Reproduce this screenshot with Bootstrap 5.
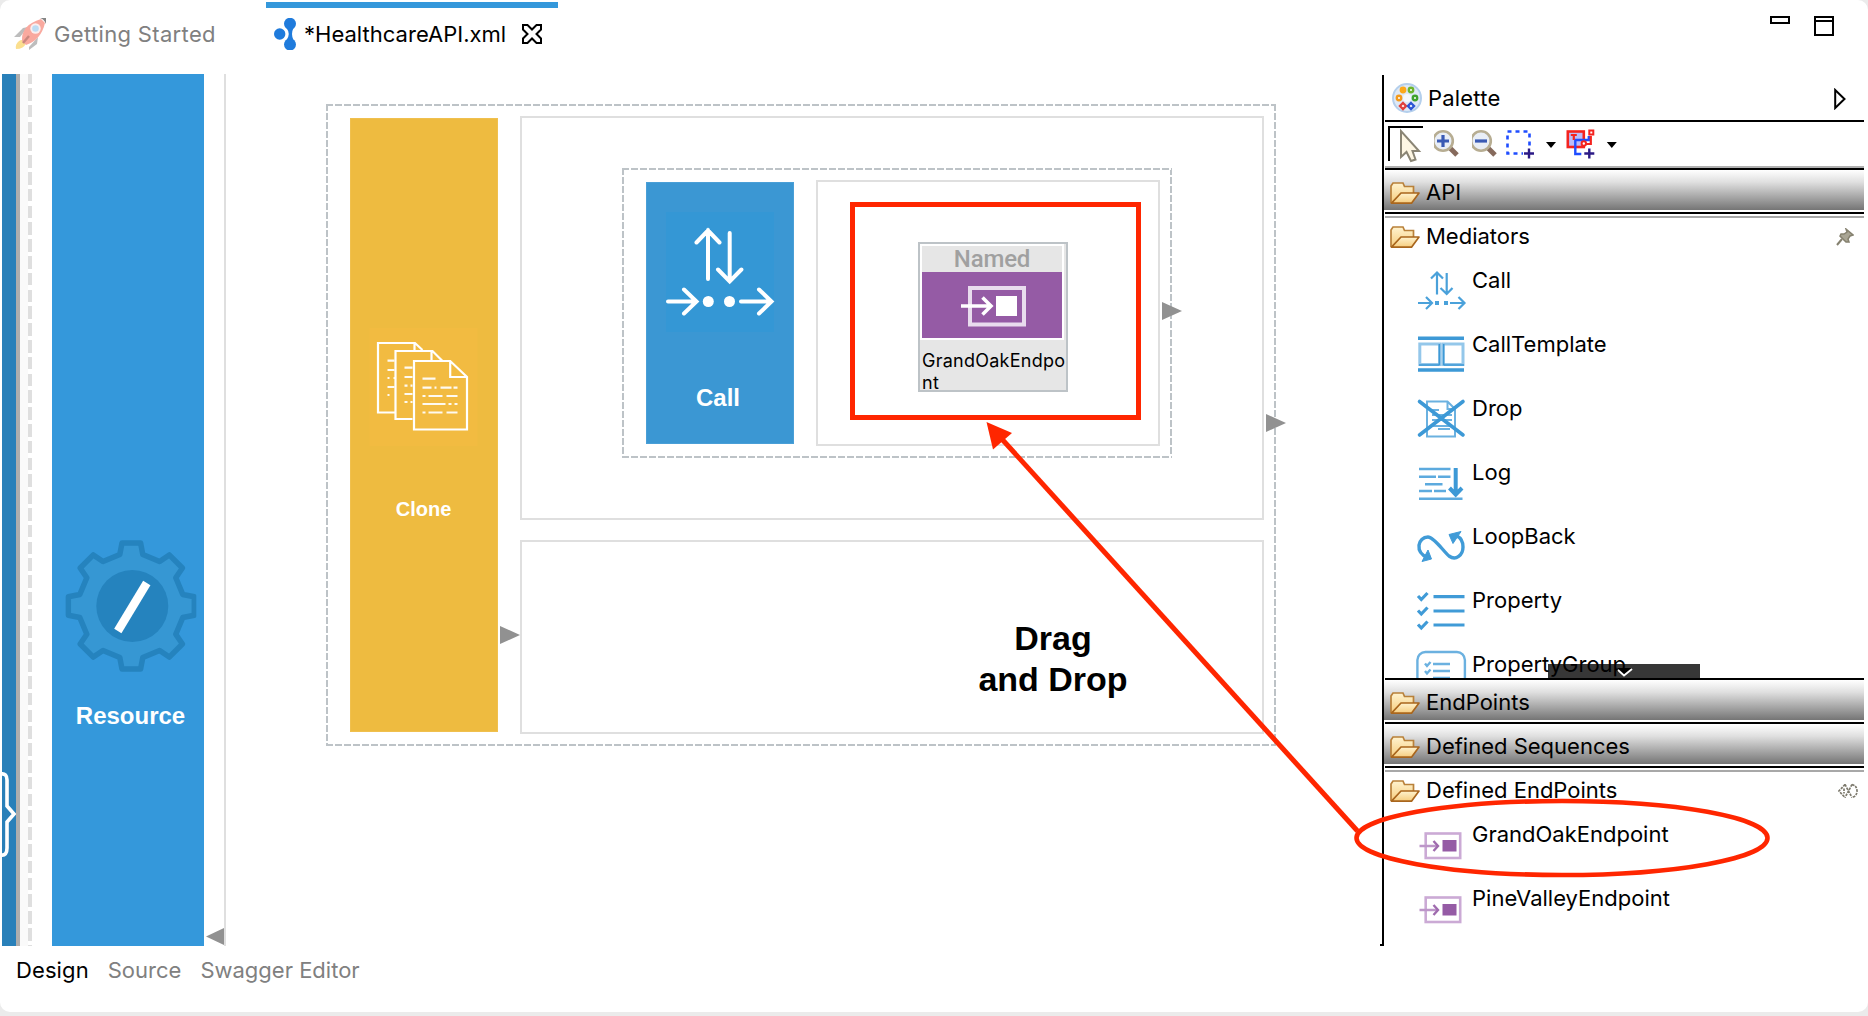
<!DOCTYPE html>
<html lang="en">
<head>
<meta charset="utf-8">
<meta name="viewport" content="width=device-width, initial-scale=1">
<title>HealthcareAPI.xml</title>
<link href="https://cdn.jsdelivr.net/npm/bootstrap@5.3.0/dist/css/bootstrap.min.css" rel="stylesheet">
<style>
  body { background: #ebebeb; font-family: Inter, "Liberation Sans", sans-serif; font-size: 22px; line-height: 28px; color: #000; overflow: hidden; }
  svg { display: block; flex: none; }
  .editor { width: 1868px; height: 1012px; background: #fff; border-radius: 10px; }
  .tabs { height: 74px; padding-left: 14px; }
  .tab { height: 68px; }
  .tab-idle { width: 252px; color: #808080; letter-spacing: .34px; }
  .tab-idle svg { margin-right: 8px; }
  .tab-open { width: 292px; padding-left: 8px; letter-spacing: .02px; }
  .tab-open::before { content: ""; position: absolute; left: 0; top: 2px; width: 100%; height: 6px; background: #3498db; }
  .tab-logo { margin-right: 8px; }
  .tab-close { margin-left: 15px; }
  .win-btns { padding: 16px 34px 0 0; gap: 24px; }
  .work { height: 872px; }
  .api-bar { width: 16px; padding-left: 2px; }
  .api-fill { background: #2980b9; }
  .shade { width: 4px; background: #adadad; }
  .pale { width: 8px; background: #fafafa; }
  .dash-v { width: 4px; margin-right: 20px; background: repeating-linear-gradient(#dfdfdf 0 12.6px, #fff 12.6px 16.8px) 0 -2.8px / 4px 900px; }
  .resource { width: 152px; background: #3498db; padding-top: 464px; }
  .node-title { font-family: "Liberation Sans", Arial, sans-serif; font-weight: 700; color: #fff; text-align: center; }
  .resource .node-title { font-size: 24px; margin-top: 28px; padding-left: 5px; }
  .gutter { width: 22px; border-right: 2px solid #dfdfdf; padding-bottom: 1px; }
  .canvas { width: 1156px; }
  .dashed-box {
    background:
      repeating-linear-gradient(90deg, #bdc3c7 0 7px, #fff 7px 9px) 0 0 / 100% 2px no-repeat,
      repeating-linear-gradient(90deg, #bdc3c7 0 7px, #fff 7px 9px) 0 100% / 100% 2px no-repeat,
      repeating-linear-gradient(#bdc3c7 0 7px, #fff 7px 9px) 0 0 / 2px 100% no-repeat,
      repeating-linear-gradient(#bdc3c7 0 7px, #fff 7px 9px) 100% 0 / 2px 100% no-repeat;
    padding: 12px 12px 12px 24px; gap: 22px;
  }
  .clone-box { left: 100px; top: 30px; width: 950px; height: 642px; }
  .branches { gap: 20px; }
  .call-box { width: 550px; height: 290px; margin: 50px 0 0 100px; }
  .solid-box { border: 2px solid #dfdfdf; }
  .branch-a { height: 404px; }
  .branch-b { height: 194px; padding: 76px 0 0 322px; }
  .mediator { width: 148px; margin: 2px 0; }
  .clone { background: #eebb40; box-shadow: inset 0 0 0 1px #f0c04e; padding-top: 210px; }
  .clone .node-title { font-size: 20px; margin-top: 49px; padding-right: 1px; }
  .call { background: #3b97d3; box-shadow: inset 0 0 0 1px #4a9fd7; padding-top: 30px; }
  .call .node-title { font-size: 24px; margin-top: 52px; padding-right: 4px; }
  .named { width: 150px; height: 150px; margin: 60px 0 0 100px; border: 2px solid #bdc3c7; background: #e6e6e6; font-size: 18px; line-height: 22px; letter-spacing: .25px; }
  .named-head { width: 144px; height: 96px; border: 2px solid #fff; }
  .named-label { height: 26px; line-height: 26px; font-family: Roboto, sans-serif; font-size: 24px; font-weight: 500; color: #a0a0a0; letter-spacing: -.2px; text-align: center; }
  .named-name { padding: 10px 0 0 2px; white-space: nowrap; }
  .hint { font-family: "Liberation Sans", Arial, sans-serif; font-weight: 700; font-size: 34px; line-height: 41px; text-align: center; width: 418px; }
  .arrow-mark { position: absolute; }
  .am1 { left: 936px; top: 228px; } .am2 { left: 1040px; top: 340px; } .am3 { left: 274px; top: 552px; }
  .palette { width: 484px; border-left: 2px solid #000; margin-top: 1px; }
  .palette-in { width: 480px; }
  .pal-title { height: 45px; padding: 0 18px 0 8px; }
  .pal-name { padding: 1px 0 0 6px; letter-spacing: .2px; }
  .pal-toggle { margin-top: 3px; }
  .rule { height: 2px; margin-left: 1px; background: #000; }
  .rule-shade { box-shadow: 0 -2px #b0b0b0; }
  .tools { height: 46px; padding-left: 4px; }
  .drawer { height: 40px; padding: 4px 6px 0 6px; gap: 6px; }
  .drawer svg { margin-top: 2px; }
  .drawer-closed { background: linear-gradient(#fff, #e0e0e0 30%, #757575); }
  .drawer-open { background: linear-gradient(#a8a8a8, #a8a8a8) 1px 2px / 100% 2px no-repeat; }
  .gap-line { margin-top: 2px; }
  .items { height: 424px; overflow: hidden; position: relative; }
  .item { height: 64px; padding-left: 32px; gap: 4px; }
  .item span { padding-top: 12px; position: relative; z-index: 1; }
  .more { position: absolute; left: 164px; bottom: 0; width: 152px; height: 14px; background: #373737; }
  .more svg { position: absolute; left: 68px; top: 3px; z-index: 2; }
  .views { padding: 10px 0 0 16px; gap: 19px; color: #808080; }
  .views .on { color: #000; letter-spacing: .1px; }
  .notes { position: absolute; left: 0; top: 0; pointer-events: none; z-index: 5; }
</style>
<script src="https://cdn.jsdelivr.net/npm/bootstrap@5.3.0/dist/js/bootstrap.bundle.min.js"></script>
</head>
<body>
<svg width="0" height="0" class="position-absolute">
  <defs>
    <linearGradient id="fg" x1="0" y1="0" x2="0" y2="1"><stop offset="0" stop-color="#fff3cf"/><stop offset="1" stop-color="#f6cd7e"/></linearGradient>
    <symbol id="folder" viewBox="0 0 30 22">
      <path d="M1 21V4l2-3h10l1.500 3.500h9V11" fill="url(#fg)" stroke="#b9813a" stroke-width="1.700"/>
      <path d="M1.500 21.200 11 11H29L21.500 21.200Z" fill="url(#fg)" stroke="#a9661d" stroke-width="1.700" stroke-linejoin="round"/>
    </symbol>
    <symbol id="endpoint" viewBox="0 0 52 64">
      <rect x="9.200" y="25.500" width="34.500" height="24.500" fill="none" stroke="#cbaad5" stroke-width="2.600"/>
      <rect x="26" y="32" width="14" height="11.500" fill="#955ba5"/>
      <path d="M3 38h18" stroke="#bd96c9" stroke-width="2.400"/><path d="M17 33l4.500 5-4.500 5" fill="none" stroke="#9f6bae" stroke-width="2.400"/>
    </symbol>
  </defs>
</svg>

<div class="editor d-flex flex-column position-relative">
  <header class="tabs d-flex">
    <div class="tab tab-idle d-flex align-items-center">
      <svg width="32" height="32" viewBox="0 0 32 32">
        <path d="M0 19l9-9 5-1-8 10zM15 29l9-10-1 7-8 6z" fill="#bdbdbd"/>
        <path d="M5 23q4-3 7 2-2 6-10 6-1-5 3-8z" fill="#fbdf8f"/>
        <path d="M8 23Q7 7 27 1l4 4Q27 22 12 27z" fill="#f9a99f"/>
        <path d="M26 0h6v6q-2-5-6-6z" fill="#858585"/>
        <circle cx="21.500" cy="10.500" r="5.200" fill="#fbeeee"/><circle cx="21.500" cy="10.500" r="3.300" fill="#bcdcf3"/>
        <path d="M9 25l6-7" stroke="#c9877f" stroke-width="2.400"/>
      </svg>
      <span>Getting Started</span>
    </div>
    <div class="tab tab-open position-relative d-flex align-items-center">
      <svg class="tab-logo" width="22" height="32" viewBox="0 0 22 32" fill="#1f7bdc">
        <circle cx="5.700" cy="16" r="5.700"/><circle cx="16" cy="5.800" r="6"/><circle cx="16" cy="26.500" r="6"/>
        <path d="M12.500 10q4.500 6 0 12h7q-3-6 0-12z"/>
      </svg>
      <span>*HealthcareAPI.xml</span>
      <svg class="tab-close" width="22" height="22" viewBox="0 0 22 22" fill="none" stroke="#000" stroke-width="2"><path d="M2 2h4.500L11 6.500 15.500 2H20v4.500L15.500 11 20 15.500V20h-4.500L11 15.500 6.500 20H2v-4.500L6.500 11 2 6.500z"/></svg>
    </div>
    <div class="win-btns ms-auto d-flex align-items-start">
      <svg width="20" height="8" viewBox="0 0 20 8" fill="none" stroke="#000" stroke-width="2"><path d="M1 1h18v6H1z"/></svg>
      <svg width="20" height="20" viewBox="0 0 20 20" fill="none" stroke="#000" stroke-width="2"><path d="M1 1h18v18H1zM1 5h18"/></svg>
    </div>
  </header>

  <main class="work d-flex">
    <div class="api-bar d-flex">
      <div class="api-fill w-100">
        <svg width="14" height="872" viewBox="2 74 14 872" fill="none" stroke="#fff" stroke-width="3.600"><path d="M1 774q6-1 6 6v26l7 8-7 8v26q0 8-6 7"/></svg>
      </div>
    </div>
    <div class="shade"></div><div class="pale"></div><div class="dash-v"></div>
    <div class="resource">
      <svg width="152" height="136" viewBox="-79.300 -68 152 136">
        <clipPath id="gc"><rect x="-66" y="-67" width="131" height="134"/></clipPath>
        <path clip-path="url(#gc)" fill="#3697d3" stroke="#2583be" stroke-width="5.500" stroke-linejoin="round" d="M-11.500-51.500-9.300-63 9.300-63 11.500-51.500 28.300-44.500 38-51.100 51.100-38 44.500-28.300 51.500-11.500 63-9.300 63 9.300 51.500 11.500 44.500 28.300 51.100 38 38 51.100 28.300 44.500 11.500 51.500 9.300 63-9.300 63-11.500 51.500-28.300 44.500-38 51.100-51.100 38-44.500 28.300-51.500 11.500-63 9.300-63-9.300-51.500-11.500-44.500-28.300-51.100-38-38-51.100-28.300-44.500z"/>
        <circle cx="1" cy="0" r="36" fill="#2583be"/><path d="M-13.500 25 15.500-23" stroke="#fff" stroke-width="8.500"/>
      </svg>
      <div class="node-title">Resource</div>
    </div>
    <div class="gutter d-flex align-items-end justify-content-end"><svg width="18" height="17" viewBox="0 0 18 17"><path d="M18 0v17L0 8.500z" fill="#919191"/></svg></div>

    <section class="canvas position-relative">
      <div class="clone-box dashed-box position-absolute d-flex">
        <div class="mediator clone">
          <svg width="148" height="118" viewBox="350.500 328 148 118" fill="none" stroke="#fff" stroke-width="2.200">
            <rect x="370" y="328" width="108" height="118" fill="#f2bb41" stroke="none"/>
            <path d="M395.500 412.500h-17V343h37l7.500 7M413 419h-17v-68h37l10 10M415 343v7M432 351v9" />
            <path d="M414.500 361h36.200l16.800 16v52.500h-53zM450.700 361v16h16.800"/>
            <path d="M423 378.700h13M423 387.700h9m3 0h2m4 0h11m2 0h4M423 396h3m3 0h14m4 0h11M423 404h23m3 0h3m3 0h3M423 412.500h3m3 0h14m4 0h11M405 367.700h8M405 377h8M405 385.700h3m3 0h2M405 394h8M405 402h3m3 0h2M388 360.700h7M388 370h7M388 378h2m4 0h2M388 387h7M388 395h2" opacity=".92"/>
          </svg>
          <div class="node-title">Clone</div>
        </div>
        <div class="branches d-flex flex-column flex-fill">
          <div class="solid-box branch-a">
            <div class="call-box dashed-box d-flex">
              <div class="mediator call">
                <svg width="148" height="120" viewBox="646 212 148 120" fill="none" stroke="#fff" stroke-width="4" stroke-linecap="round">
                  <rect x="666" y="212" width="108" height="120" fill="#3497d5" stroke="none"/>
                  <path d="M708 230v49M696.500 242.500 708 230.500l11.500 12M729.700 233v48M718 269.500l11.700 12 11.700-12M668 301.500h28M684 289.500l12.500 12-12.500 12M741 301.500h30M759 289.500l12.500 12-12.500 12"/>
                  <g fill="#fff" stroke="none"><circle cx="708.300" cy="301.500" r="5.500"/><circle cx="729.500" cy="301.500" r="5.500"/></g>
                </svg>
                <div class="node-title">Call</div>
              </div>
              <div class="solid-box flex-fill">
                <div class="named">
                  <div class="named-head">
                    <div class="named-label">Named</div>
                    <svg width="140" height="66" viewBox="922 272 140 66" fill="none">
                      <rect x="922" y="272" width="140" height="66" fill="#955ba5"/>
                      <rect x="970" y="288" width="54" height="36.500" stroke="#e9dcee" stroke-width="4"/>
                      <rect x="996" y="296" width="21" height="20" fill="#fff"/>
                      <path d="M961 306h29M982.500 297.500l8.500 8.500-8.500 8.500" stroke="#fff" stroke-width="3.600"/>
                    </svg>
                  </div>
                  <div class="named-name">GrandOakEndpo<br>nt</div>
                </div>
              </div>
            </div>
          </div>
          <div class="solid-box branch-b"><div class="hint">Drag<br>and Drop</div></div>
        </div>
      </div>
      <svg class="arrow-mark am1" width="20" height="18" viewBox="0 0 20 18"><path d="M0 0v18l20-9z" fill="#919191"/></svg>
      <svg class="arrow-mark am2" width="20" height="18" viewBox="0 0 20 18"><path d="M0 0v18l20-9z" fill="#919191"/></svg>
      <svg class="arrow-mark am3" width="20" height="18" viewBox="0 0 20 18"><path d="M0 0v18l20-9z" fill="#919191"/></svg>
    </section>

    <aside class="palette">
      <div class="palette-in">
        <div class="pal-title d-flex align-items-center">
          <svg width="30" height="30" viewBox="1392 82 30 30">
            <circle cx="1407" cy="97" r="14" fill="#dfe9f6" stroke="#b4cfec" stroke-width="2"/><circle cx="1407" cy="97" r="4" fill="#f4f8fd"/>
            <g stroke-width="2.400" fill="#fff"><circle cx="1403" cy="89" r="2.200" stroke="#fba91c" fill="#fba91c"/><circle cx="1411" cy="89" r="2.200" stroke="#6cb52d"/><circle cx="1399" cy="97" r="2.200" stroke="#f39a1b"/><circle cx="1415" cy="97" r="2.200" stroke="#3fa32c"/><path d="M1403 102l3 3-3 3-3-3z" stroke="#e0403c"/><path d="M1411 102l3 3-3 3-3-3z" stroke="#2b55d4"/></g>
          </svg>
          <span class="pal-name">Palette</span>
          <svg class="pal-toggle ms-auto" width="12" height="22" viewBox="0 0 12 22"><path d="M1.200 2v18L10.500 11z" fill="none" stroke="#000" stroke-width="2"/></svg>
        </div>
        <div class="rule"></div>
        <div class="tools d-flex">
          <svg width="46" height="44" viewBox="1388 122 46 44"><path d="M1389 161v-34h34" fill="none" stroke="#000" stroke-width="2"/><path d="M1401 131v26l5.500-5 4.500 9 4.500-1.500-3-8.500h6.500z" fill="#fdf6e3" stroke="#8a8575" stroke-width="2"/></svg>
          <svg width="38" height="44" viewBox="1430 122 38 44"><path d="M1446 148l7 7" stroke="#866a5c" stroke-width="5"/><circle cx="1439" cy="141" r="9.800" fill="#e9eef6" stroke="#b7ad92" stroke-width="2.600"/><path d="M1433 141h12M1439 135v12" stroke="#3a5ab4" stroke-width="3.200"/></svg>
          <svg width="32" height="44" viewBox="1468 122 32 44"><path d="M1484 148l7 7" stroke="#866a5c" stroke-width="5"/><circle cx="1477" cy="141" r="9.800" fill="#e9eef6" stroke="#b7ad92" stroke-width="2.600"/><path d="M1471 141h12" stroke="#3a5ab4" stroke-width="3.200"/></svg>
          <svg width="60" height="44" viewBox="1508 122 60 44"><path d="M1511.500 131.500h22v22h-22z" fill="none" stroke="#1f4dff" stroke-width="2.600" stroke-dasharray="4 4"/><rect x="1527" y="147" width="10" height="10" fill="#fff"/><path d="M1528 153.500h10M1533 148.500v10" stroke="#2b1a86" stroke-width="2.400"/><path d="M1550 142h10l-5 6z"/></svg>
          <svg width="60" height="44" viewBox="1565.200 122 60 44" fill="none"><rect x="1569" y="131.500" width="16" height="15.500" fill="#bcbcf8" stroke="#f4231f" stroke-width="2.600"/><path d="M1572 135h6M1575 134v6" stroke="#f4231f" stroke-width="2.200"/><path d="M1576 140h14v-4M1576.500 140v14h6" stroke="#1f4dff" stroke-width="2.400"/><path d="M1585 144h7v-8" stroke="#f4231f" stroke-width="2.200"/><rect x="1590.500" y="130.500" width="4" height="4" fill="#fff" stroke="#f4231f" stroke-width="2"/><circle cx="1585" cy="143.500" r="2.200" fill="#fff" stroke="#f4231f" stroke-width="2"/><path d="M1585.500 153.500h10M1590.500 148.500v10" stroke="#2b1a86" stroke-width="2.400"/><path d="M1608 142h10l-5 6z" fill="#000"/></svg>
        </div>
        <div class="rule rule-shade"></div>
        <div class="drawer drawer-closed d-flex align-items-center"><svg width="30" height="22"><use href="#folder"/></svg><span>API</span></div>
        <div class="rule gap-line"></div>
        <div class="drawer drawer-open d-flex align-items-center"><svg width="30" height="22"><use href="#folder"/></svg><span>Mediators</span>
          <svg class="ms-auto me-1" width="18" height="18" viewBox="0 0 18 18"><path d="M10 1l7 6-3 1-2 3 1 3-3 0-6-6 1-2 3 0 3-2z" fill="#a9a594" stroke="#85816f" stroke-width="1.500"/><path d="M6 11l-5 6" stroke="#85816f" stroke-width="2"/></svg>
        </div>
        <div class="items">
          <div class="item d-flex align-items-start"><svg width="52" height="64" viewBox="0 0 52 64" fill="none" stroke="#4aa1da" stroke-width="2.200"><path d="M21 18.500v22M15 24.500l6-6 6 6M30.700 19v21M24.500 34l6.200 6 5.800-6M2 49h13M10 43l6 6-6 6M34 49h14M42.500 43l6 6-6 6"/><path d="M19 49h4M28 49h4" stroke-width="4"/></svg><span>Call</span></div>
          <div class="item d-flex align-items-start"><svg width="52" height="64" viewBox="0 0 52 64" fill="none" stroke="#3d99d6"><path d="M2 20.200h46M2 52h46" stroke-width="3.400"/><path d="M3.800 26h20v20.500h-20zM27 26h20v20.500h-20z" stroke="#94c7ea" stroke-width="3"/><path d="M23.300 26v21M27.700 26v21M3 47h20.500M27.500 47H48" stroke-width="1.600"/></svg><span>CallTemplate</span></div>
          <div class="item d-flex align-items-start"><svg width="52" height="64" viewBox="0 0 52 64" fill="none" stroke="#6bb1e0" stroke-width="2"><path d="M11 19.500h20.500L39 27v27.500H11zM31.500 19.500V27H39M15 28h8M16 33h20M16 38h20M17 44h18M22 47h12"/><path d="M3.500 19.500 47 53M47 19.500 3.500 53" stroke="#3d99d6" stroke-width="3.600" stroke-linecap="round"/></svg><span>Drop</span></div>
          <div class="item d-flex align-items-start"><svg width="52" height="64" viewBox="0 0 52 64" fill="none" stroke="#5caade" stroke-width="2.400"><path d="M3 23h31.500M3 30.700h17M22 30.700h12.500M9 38.300h17.500M3 45h13M18 45h12M3 52.700h43.500"/><path d="M39.700 22v25M33.500 42l6.200 6.500 6.300-6.500" stroke="#3d99d6" stroke-width="4"/></svg><span>Log</span></div>
          <div class="item d-flex align-items-start"><svg width="52" height="64" viewBox="0 0 52 64" fill="none" stroke="#409bd7" stroke-width="3.400"><path d="M12 48C-2 42 2 27 12 27c6 0 16 15 21 19 7 5 14-1 14-9 0-5-2-9-6-11"/><path d="M6 51.500 15.500 49 12 40z" fill="#409bd7" stroke-width="1"/><path d="M45 21.500 33 24.500l4 9z" fill="#409bd7" stroke-width="1"/></svg><span>LoopBack</span></div>
          <div class="item d-flex align-items-start"><svg width="52" height="64" viewBox="0 0 52 64" fill="none" stroke="#409bd7" stroke-width="3.200"><path d="M17.500 22.700h31M17.500 37h31M17.500 51h31M2 22l3.300 3.500L11.500 19M2 36.500 5.300 40l6.200-6.500M2 50.500 5.300 54l6.200-6.500"/></svg><span>Property</span></div>
          <div class="item d-flex align-items-start"><svg width="52" height="64" viewBox="0 0 52 64" fill="none" stroke="#6bb1e0" stroke-width="2.400"><rect x="1.400" y="14" width="47.500" height="44" rx="8"/><path d="M17 26h17M17 33h17M17 40h17M9 25.500l2 2.500 3.500-4M9 33l2 2.500 3.500-4"/></svg><span>PropertyGroup</span></div>
          <div class="more"><svg width="18" height="10" viewBox="0 0 18 10"><path d="M1 1l7 7 8-7" fill="#000" stroke="none"/><path d="M2 3l6 5.500L16 2" fill="none" stroke="#fff" stroke-width="1.800"/></svg></div>
        </div>
        <div class="rule"></div>
        <div class="drawer drawer-closed d-flex align-items-center"><svg width="30" height="22"><use href="#folder"/></svg><span>EndPoints</span></div>
        <div class="rule gap-line"></div>
        <div class="drawer drawer-closed d-flex align-items-center"><svg width="30" height="22"><use href="#folder"/></svg><span>Defined Sequences</span></div>
        <div class="rule gap-line"></div>
        <div class="drawer drawer-open d-flex align-items-center"><svg width="30" height="22"><use href="#folder"/></svg><span>Defined EndPoints</span>
          <svg class="ms-auto" width="20" height="16" viewBox="0 0 20 16" fill="none" stroke="#7c796c" stroke-width="1.700"><path d="M7 1.500 1 8l6 6.500M6 5.500v5M7 1.500 14 14.500M14 1.500 7 14.500M14 1.500Q19 3 19 8t-5 6.500" stroke-dasharray="2.500 1"/></svg>
        </div>
        <div class="item d-flex align-items-start"><svg width="52" height="64" viewBox="-.5 0 52 64"><use href="#endpoint" width="52" height="64"/></svg><span>GrandOakEndpoint</span></div>
        <div class="item d-flex align-items-start"><svg width="52" height="64" viewBox="-.5 0 52 64"><use href="#endpoint" width="52" height="64"/></svg><span>PineValleyEndpoint</span></div>
      </div>
    </aside>
  </main>

  <footer class="views d-flex"><span class="on">Design</span><span>Source</span><span>Swagger Editor</span></footer>

  <svg class="notes" width="1868" height="1012" viewBox="0 0 1868 1012" fill="none" stroke="#ff2600">
    <rect x="852.500" y="204.500" width="286" height="213" stroke-width="5"/>
    <path d="M1000 437 1357.500 831" stroke-width="5"/>
    <path d="M986.500 422 1012 433 993 449.500z" fill="#ff2600" stroke="none"/>
    <ellipse cx="1562" cy="838" rx="205.500" ry="37" stroke-width="4.600"/>
    <path d="M1380 945h3.500" stroke="#000" stroke-width="2"/>
  </svg>
</div>
</body>
</html>
